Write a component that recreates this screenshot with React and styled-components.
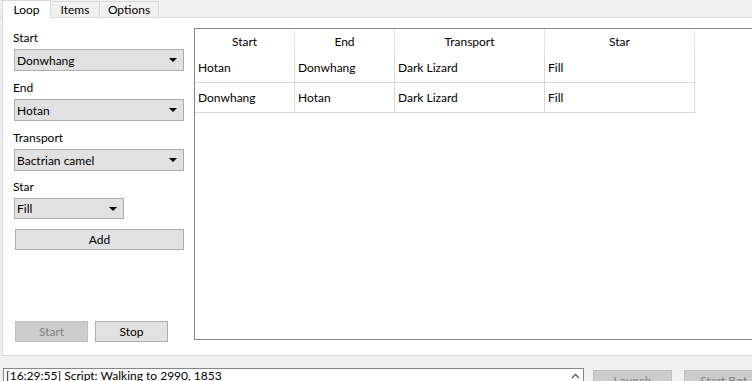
import React from 'react';
import styled, { createGlobalStyle } from 'styled-components';

const Global = createGlobalStyle`
  html, body { margin: 0; padding: 0; }
  body {
    font-family: Lato, "Noto Sans", sans-serif;
    font-size: 12px;
    color: #000;
    background: #f0f0f0;
  }
`;

const Window = styled.div`
  width: 752px;
  height: 381px;
  overflow: hidden;
  display: flex;
  flex-direction: column;
  background: #f0f0f0;
`;

const TabBar = styled.div`
  display: flex;
  flex-shrink: 0;
  height: 18px;
  border-bottom: 1px solid #d9d9d9;
  box-sizing: border-box;
  padding-left: 2px;
`;

const Tab = styled.div`
  box-sizing: border-box;
  width: ${(p) => p.$w}px;
  height: ${(p) => (p.$active ? 19 : 17)}px;
  margin-top: ${(p) => (p.$active ? 0 : 1)}px;
  margin-left: ${(p) => (p.$first ? 0 : -1)}px;
  border: 1px solid #d9d9d9;
  border-bottom: ${(p) => (p.$active ? 'none' : '1px solid #d9d9d9')};
  background: ${(p) => (p.$active ? '#fff' : '#f0f0f0')};
  display: flex;
  align-items: center;
  justify-content: center;
  line-height: 1;
  padding-top: ${(p) => (p.$active ? 0 : 1)}px;
  z-index: 1;
`;

const Panel = styled.div`
  height: 338px;
  flex-shrink: 0;
  margin-left: 2px;
  background: #fff;
  border-left: 1px solid #d9d9d9;
  border-bottom: 1px solid #d9d9d9;
  box-sizing: border-box;
  display: flex;
  padding: 10px 0 15px 0;
`;

const Side = styled.div`
  width: 180px;
  padding-left: 10px;
  padding-top: 3px;
  box-sizing: border-box;
  display: flex;
  flex-direction: column;
  flex-shrink: 0;
`;

const Label = styled.div`
  height: 14px;
  line-height: 14px;
  margin-bottom: 4px;
  margin-top: ${(p) => p.$gap || 0}px;
`;

const Select = styled.div`
  box-sizing: border-box;
  width: ${(p) => p.$w || 170}px;
  height: ${(p) => p.$h || 22}px;
  margin-left: 1px;
  background: #e1e1e1;
  border: 1px solid #adadad;
  display: flex;
  align-items: center;
  justify-content: space-between;
  padding: 0 6px 0 2px;
`;

const Arrow = styled.span`
  width: 0;
  height: 0;
  border-left: 4px solid transparent;
  border-right: 4px solid transparent;
  border-top: 4px solid #000;
`;

const Button = styled.div`
  box-sizing: border-box;
  width: ${(p) => p.$w}px;
  height: 21px;
  background: ${(p) => (p.$disabled ? '#cccccc' : '#e1e1e1')};
  border: 1px solid ${(p) => (p.$disabled ? '#bfbfbf' : '#adadad')};
  color: ${(p) => (p.$disabled ? '#838383' : '#000')};
  display: flex;
  align-items: center;
  justify-content: center;
`;

const AddRow = styled.div`
  margin-top: 10px;
  margin-left: 2px;
`;

const Actions = styled.div`
  margin-top: auto;
  margin-bottom: -2px;
  margin-left: 2px;
  display: flex;
  gap: 7px;
`;

const TableBox = styled.div`
  flex: 1;
  margin-left: 11px;
  border: 1px solid #828790;
  border-right: none;
  background: #fff;
`;

const Grid = styled.div`
  display: grid;
  grid-template-columns: 100px 100px 150px 150px;
`;

const Head = styled.div`
  height: 25px;
  display: flex;
  align-items: center;
  justify-content: center;
  border-right: 1px solid #e5e5e5;
  box-sizing: border-box;
`;

const Cell = styled.div`
  height: ${(p) => (p.$first ? 29 : 30)}px;
  display: flex;
  align-items: center;
  padding-left: 3px;
  padding-bottom: 1px;
  border-right: 1px solid #d9d9d9;
  border-bottom: 1px solid #d9d9d9;
  box-sizing: border-box;
`;

const Footer = styled.div`
  flex: 1;
  display: flex;
  align-items: flex-start;
  padding: 12px 0 0 3px;
`;

const LogBox = styled.div`
  box-sizing: border-box;
  width: 581px;
  height: 30px;
  flex-shrink: 0;
  background: #fff;
  border: 1px solid #828790;
  display: flex;
`;

const LogText = styled.div`
  flex: 1;
  padding: 0 0 0 2px;
  line-height: 14px;
`;

const Scroll = styled.div`
  width: 15px;
  display: flex;
  justify-content: center;
  padding-top: 4px;
  box-sizing: border-box;
`;

const BotButtons = styled.div`
  display: flex;
  gap: 12px;
  margin-left: 9px;
  margin-top: 2px;
`;

const rows = [
  ['Hotan', 'Donwhang', 'Dark Lizard', 'Fill'],
  ['Donwhang', 'Hotan', 'Dark Lizard', 'Fill'],
];

export default function App() {
  return (
    <Window>
      <Global />
      <TabBar>
        <Tab $w={49} $active $first>Loop</Tab>
        <Tab $w={50}>Items</Tab>
        <Tab $w={60}>Options</Tab>
      </TabBar>
      <Panel>
        <Side>
          <Label>Start</Label>
          <Select>Donwhang<Arrow /></Select>
          <Label $gap={10}>End</Label>
          <Select>Hotan<Arrow /></Select>
          <Label $gap={10}>Transport</Label>
          <Select>Bactrian camel<Arrow /></Select>
          <Label $gap={9}>Star</Label>
          <Select $w={110} $h={21}>Fill<Arrow /></Select>
          <AddRow><Button $w={169}>Add</Button></AddRow>
          <Actions>
            <Button $w={73} $disabled>Start</Button>
            <Button $w={73}>Stop</Button>
          </Actions>
        </Side>
        <TableBox>
          <Grid>
            {['Start', 'End', 'Transport', 'Star'].map((h) => (
              <Head key={h}>{h}</Head>
            ))}
            {rows.map((r, i) =>
              r.map((c, j) => (
                <Cell key={i + '-' + j} $first={i === 0}>{c}</Cell>
              ))
            )}
          </Grid>
        </TableBox>
      </Panel>
      <Footer>
        <LogBox>
          <LogText>[16:29:55] Script: Walking to 2990, 1853</LogText>
          <Scroll>
            <svg width="9" height="6" viewBox="0 0 9 6">
              <path d="M1 5 L4.5 1.5 L8 5" fill="none" stroke="#606060" strokeWidth="1.4" />
            </svg>
          </Scroll>
        </LogBox>
        <BotButtons>
          <Button $w={79} $disabled>Launch</Button>
          <Button $w={79} $disabled>Start Bot</Button>
        </BotButtons>
      </Footer>
    </Window>
  );
}
